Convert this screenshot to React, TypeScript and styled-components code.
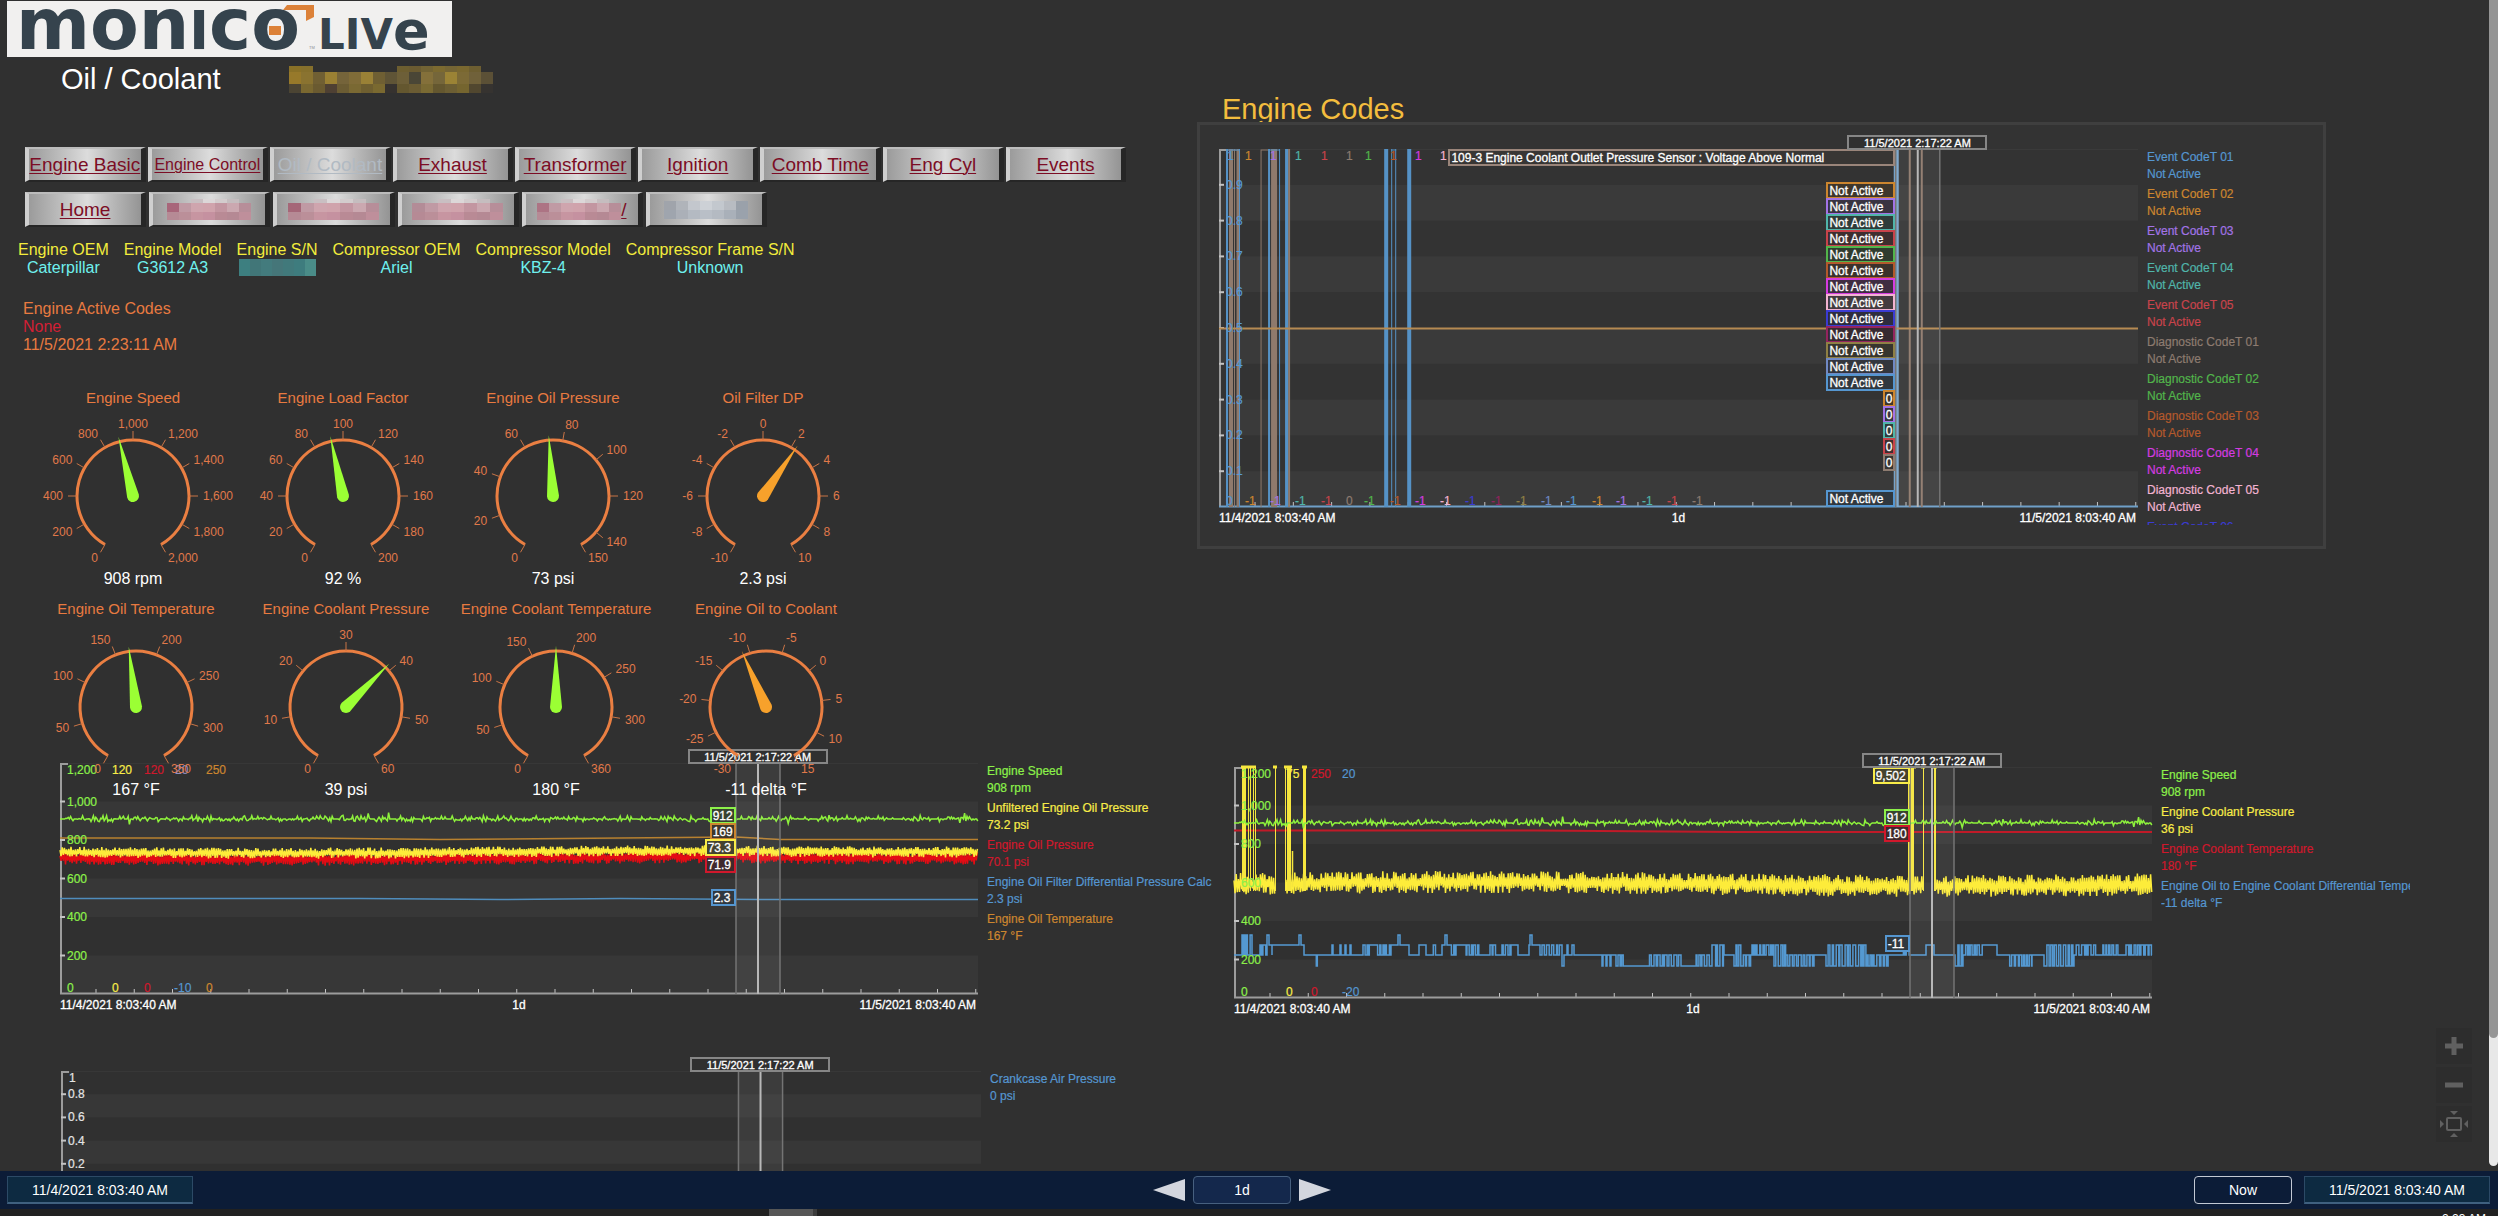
import React from "react";
import styled, { createGlobalStyle } from "styled-components";

const BLUE = "#5596d0";
const ORANGE = "#cc862f";
const PURPLE = "#a273e6";
const TEAL = "#50b5aa";
const RED = "#c8434b";
const BROWN = "#8d7b70";
const GREEN = "#52b54b";
const RUST = "#b4592c";
const MAGENTA = "#d53be0";
const PINK = "#f2b3d2";
const INDIGO = "#3b3bd2";
const CRIMSON = "#93245f";
const OLIVE = "#8f8045";
const STEEL = "#7089c4";
const LIME = "#8cf04a";
const YELLOW = "#f8ec48";
const CHERRY = "#d0182c";

const GlobalStyle = createGlobalStyle`
  * { box-sizing: border-box; }
  body {
    margin: 0;
    background: #303030;
    color: #fff;
    font-family: "Liberation Sans", Arial, Helvetica, sans-serif;
  }
`;

const Page = styled.div`
  display: flex;
  flex-direction: column;
  height: 100vh;
  overflow: hidden;
`;

const Viewport = styled.div`
  position: relative;
  display: flex;
  flex: 1;
  min-height: 0;
`;

const Board = styled.main`
  display: grid;
  grid-template-columns: 1197fr 1292fr;
  flex: 1;
  min-width: 0;
  overflow: hidden;
`;

const Column = styled.section<{ $top: number }>`
  display: flex;
  flex-direction: column;
  min-width: 0;
  padding-top: ${(p) => p.$top}px;
`;

const ScrollTrack = styled.div`
  width: 9px;
  margin-bottom: 5px;
  border-radius: 0 0 5px 5px;
  background: #e8e8e8;
`;

const ScrollThumb = styled.div`
  height: 89%;
  border-radius: 0 0 5px 5px;
  background: #959595;
`;

/* ---------- header ---------- */

const Logo = styled.svg`
  display: block;
  flex: none;
  margin-left: 7px;
  background: #f1f0ef;
`;

const TitleRow = styled.div`
  display: flex;
  align-items: center;
  gap: 68px;
  margin: 5px 0 51px 61px;
`;

const PageTitle = styled.h1`
  margin: 0;
  font-size: 29px;
  font-weight: 400;
  line-height: 34px;
  white-space: nowrap;
`;

const NavRow = styled.nav<{ $gap: number; $share: number }>`
  display: grid;
  grid-auto-flow: column;
  grid-auto-columns: 1fr;
  gap: ${(p) => p.$gap}px;
  width: ${(p) => p.$share}%;
  margin: 0 0 10px 25px;
`;

const NavLink = styled.a<{ $size?: number; $muted?: boolean }>`
  display: flex;
  align-items: center;
  justify-content: center;
  height: 35px;
  border-style: solid;
  border-width: 2px 5px 2px 4px;
  border-color: #bcbcbc #262626 #262626 #cfcfcf;
  background: linear-gradient(90deg, #9b9b9b 0%, #bdbdbd 28%, #dcdcdc 52%, #b9b9b9 74%, #949494 100%) padding-box;
  color: ${(p) => (p.$muted ? "#b1bac3" : "#7c0d25")};
  font-size: ${(p) => p.$size ?? 19}px;
  line-height: 21px;
  white-space: nowrap;
  text-decoration: underline;
  text-decoration-thickness: 1px;
  text-underline-offset: 2px;
`;

const Facts = styled.dl`
  display: flex;
  gap: 15px;
  margin: 4px 0 23px 18px;
  font-size: 16px;
  line-height: 18px;
  text-align: center;
  white-space: nowrap;
`;

const FactName = styled.dt`
  color: #f3ec3c;
`;

const FactValue = styled.dd`
  display: flex;
  justify-content: center;
  height: 18px;
  margin: 0;
  color: #6ff0ee;
`;

const ActiveCodes = styled.div`
  margin: 0 0 35px 23px;
  color: #e87a40;
  font-size: 16px;
  line-height: 18px;
`;

const NoCode = styled.div`
  color: #d31f35;
`;

/* ---------- mosaic ---------- */

type MosaicProps = { cell: number; rows: { h: number; colors: string[] }[] };

function Mosaic({ cell, rows }: MosaicProps) {
  const height = rows.reduce((sum, r) => sum + r.h, 0);
  const cols = Math.max(...rows.map((r) => r.colors.length));
  let y = 0;
  return (
    <svg width={cols * cell} height={height} aria-hidden="true" shapeRendering="crispEdges">
      {rows.map((row, i) => {
        const top = y;
        y += row.h;
        return row.colors.map((c, j) =>
          c ? <rect key={`${i}-${j}`} x={j * cell} y={top} width={cell} height={row.h} fill={c} /> : null
        );
      })}
    </svg>
  );
}

const SITE_MOSAIC = [
  { h: 6, colors: ["#8a7127", "#86702c", "", "", "", "", "", "", "", "#6d5e30", "#6b5b31", "#726334", "#7c6a30", "#756534", "#7a6830", "#6d5e31"] },
  { h: 12, colors: ["#97792a", "#8a7330", "#705f33", "#9a8033", "#75643a", "#806c38", "#9a8136", "#6f5f33", "#5f5436", "#6d5f38", "#4a4636", "#84703a", "#75663a", "#9b8335", "#7c6a36", "#70613a", "#5b5036"] },
  { h: 9, colors: ["#4b4433", "#7a6830", "#6a5a30", "#4e4033", "#6b5c33", "#7a6933", "#6f5f30", "#7a6930", "#36322f", "#64572f", "#6b5c33", "#7a6a33", "#64572f", "#6c5e33", "#75652f", "#51472f", "#363330"] },
];

const pinkMosaic = (a: string) => [
  { h: 4, colors: ["", "", "#c9bfc2", "#dcd7d8", "#d3cccd", "#c5bdbf", ""] },
  { h: 9, colors: [a, "#c09aa4", "#cfa5ae", "#d0a3ac", "#c396a1", "#cba8b0", "#b78e99"] },
  { h: 8, colors: ["#b68a95", "#bb8f99", "#c795a1", "#c591a0", "#b98a95", "#b58994", "#bf8f9b"] },
];

const GREY_MOSAIC = [
  { h: 9, colors: ["#a0a4ab", "#b0b4ba", "#c3c7cd", "#cdd1d6", "#c3c8ce", "#b8bcc2", "#9aa1aa"] },
  { h: 9, colors: ["#9fa5ae", "#abb0b8", "#b4bac2", "#b9bfc7", "#b4bac2", "#a9b0b9", "#9aa2ac"] },
];

const SERIAL_MOSAIC = [{ h: 17, colors: ["#3d7f80", "#417678", "#437b7d", "#457679", "#41797b", "#3e7c7e", "#4a8c88"] }];

/* ---------- gauges ---------- */

const GaugeRow = styled.div<{ $left: number }>`
  position: relative;
  z-index: 1;
  display: grid;
  grid-template-columns: repeat(4, 210px);
  margin-left: ${(p) => p.$left}px;
  margin-bottom: 13px;
`;

const GaugeBox = styled.figure`
  display: flex;
  flex-direction: column;
  align-items: center;
  margin: 0;
`;

const GaugeTitle = styled.figcaption`
  color: #e87a40;
  font-size: 15px;
  line-height: 18px;
  white-space: nowrap;
`;

const GaugeValue = styled.output`
  padding-top: 1px;
  font-size: 16px;
  line-height: 17px;
  white-space: nowrap;
`;

const GaugeDial = styled.svg`
  display: block;
  width: 210px;
  height: 162px;
  font-size: 12px;
  fill: #e0794a;
`;

type GaugeSpec = { title: string; value: number; text: string; min: number; max: number; step: number; warn?: boolean };

function Gauge({ title, value, text, min, max, step, warn }: GaugeSpec) {
  const cx = 105;
  const cy = 89;
  const angle = (v: number) => (((v - min) / (max - min)) * 300 - 150) * (Math.PI / 180);
  const at = (a: number, r: number, ry = r) => [cx + Math.sin(a) * r, cy - Math.cos(a) * ry];
  const marks: number[] = [];
  for (let v = min; v < max - step / 3; v += step) marks.push(v);
  marks.push(max);
  const [sx, sy] = at(angle(min), 56);
  const [ex, ey] = at(angle(max), 56);
  const deg = (angle(value) * 180) / Math.PI;
  return (
    <GaugeBox>
      <GaugeTitle>{title}</GaugeTitle>
      <GaugeDial viewBox="0 0 210 162">
        <path d={`M${sx} ${sy}A56 56 0 1 1 ${ex} ${ey}`} fill="none" stroke="#ea7f42" strokeWidth="3" />
        {marks.map((v) => {
          const a = angle(v);
          const [x1, y1] = at(a, 56);
          const [x2, y2] = at(a, 65);
          const [tx, ty] = at(a, 70, 72);
          const s = Math.sin(a);
          return (
            <g key={v}>
              <line x1={x1} y1={y1} x2={x2} y2={y2} stroke="#c87446" />
              <text x={tx} y={ty + 4} textAnchor={Math.abs(s) < 0.05 ? "middle" : s < 0 ? "end" : "start"}>
                {v.toLocaleString("en-US")}
              </text>
            </g>
          );
        })}
        <path
          d={`M${cx} ${cy - 61}L${cx + 6} ${cy}A6 6 0 0 1 ${cx - 6} ${cy}Z`}
          transform={`rotate(${deg} ${cx} ${cy})`}
          fill={warn ? "#f7a12b" : "#9bff34"}
        />
      </GaugeDial>
      <GaugeValue>{text}</GaugeValue>
    </GaugeBox>
  );
}

const GAUGES: GaugeSpec[][] = [
  [
    { title: "Engine Speed", value: 908, text: "908 rpm", min: 0, max: 2000, step: 200 },
    { title: "Engine Load Factor", value: 92, text: "92 %", min: 0, max: 200, step: 20 },
    { title: "Engine Oil Pressure", value: 73, text: "73 psi", min: 0, max: 150, step: 20 },
    { title: "Oil Filter DP", value: 2.3, text: "2.3 psi", min: -10, max: 10, step: 2, warn: true },
  ],
  [
    { title: "Engine Oil Temperature", value: 167, text: "167 °F", min: 0, max: 350, step: 50 },
    { title: "Engine Coolant Pressure", value: 39, text: "39 psi", min: 0, max: 60, step: 10 },
    { title: "Engine Coolant Temperature", value: 180, text: "180 °F", min: 0, max: 360, step: 50 },
    { title: "Engine Oil to Coolant", value: -11, text: "-11 delta °F", min: -30, max: 15, step: 5, warn: true },
  ],
];

/* ---------- trend charts ---------- */

const ChartRow = styled.div<{ $top: number; $left: number; $right?: number }>`
  display: flex;
  gap: 9px;
  margin-top: ${(p) => p.$top}px;
  padding: 0 ${(p) => p.$right ?? 0}px 0 ${(p) => p.$left}px;
`;

const ChartMain = styled.div`
  flex: 1;
  min-width: 0;
`;

const Plot = styled.div<{ $height: number }>`
  position: relative;
  height: ${(p) => p.$height}px;
`;

const PlotSvg = styled.svg`
  display: block;
  width: 100%;
  height: 100%;
  overflow: visible;
`;

const Caption = styled.div`
  display: grid;
  grid-template-columns: 1fr auto 1fr;
  padding-top: 4px;
  font-size: 12px;
  line-height: 15px;
  -webkit-text-stroke: 0.3px currentColor;
  span:last-child { text-align: right; padding-right: 2px; }
`;

const CursorTime = styled.div`
  position: absolute;
  left: 76%;
  top: -14px;
  width: 140px;
  height: 15px;
  margin-left: -70px;
  border: 2px solid #868686;
  background: #303030;
  font-size: 11px;
  line-height: 12px;
  text-align: center;
  white-space: nowrap;
  -webkit-text-stroke: 0.3px currentColor;
`;

const AxisText = styled.span<{ $x: number; $y: number; $color: string }>`
  position: absolute;
  left: ${(p) => p.$x}px;
  top: ${(p) => p.$y}px;
  color: ${(p) => p.$color};
  font-size: 12px;
  line-height: 14px;
  -webkit-text-stroke: 0.2px currentColor;
`;

const Tag = styled.span<{ $y: number; $color: string; $min?: number }>`
  position: absolute;
  right: 26.4%;
  top: ${(p) => p.$y}px;
  min-width: ${(p) => p.$min ?? 25}px;
  height: 17px;
  padding: 0 1px;
  border: 2px solid ${(p) => p.$color};
  background: color-mix(in srgb, ${(p) => p.$color} 12%, #2b2b2b);
  font-size: 12px;
  line-height: 14px;
  white-space: nowrap;
  -webkit-text-stroke: 0.3px currentColor;
`;

const LegendList = styled.ul<{ $width: number; $height?: number; $clip?: boolean }>`
  display: flex;
  flex: none;
  flex-direction: column;
  gap: 3px;
  width: ${(p) => p.$width}px;
  height: ${(p) => (p.$height ? `${p.$height}px` : "auto")};
  margin: 0;
  padding: 0;
  overflow: ${(p) => (p.$clip ? "hidden" : "visible")};
  list-style: none;
  font-size: 12px;
  line-height: 17px;
  white-space: nowrap;
  -webkit-text-stroke: 0.2px currentColor;
`;

const LegendItem = styled.li<{ $color: string }>`
  flex: none;
  color: ${(p) => p.$color};
  div { height: 17px; }
`;

type Label = [x: number, y: number, text: string, color: string];
type TagSpec = [y: number, text: string, color: string, min?: number];
type Entry = [name: string, value: string, color: string];

const W = 918;

type ChartProps = {
  height: number;
  divisions: number;
  labels: Label[];
  tags?: TagSpec[];
  fill?: string;
  axis?: string;
  children?: React.ReactNode;
};

function Chart({ height, divisions, labels, tags = [], fill = "#373737", axis = "#9c9c9c", children }: ChartProps) {
  const step = height / divisions;
  const hours = Array.from({ length: 24 }, (_, i) => 36 + i * 38.25);
  return (
    <ChartMain>
      <Plot $height={height}>
        <PlotSvg viewBox={`0 0 ${W} ${height}`} preserveAspectRatio="none">
          <line x1="0" x2={W} y1="0.5" y2="0.5" stroke={fill} />
          {Array.from({ length: divisions }, (_, i) =>
            i % 2 ? <rect key={i} x="0" y={i * step} width={W} height={step} fill={fill} /> : null
          )}
          <path d={`M8 1H1V${height}`} fill="none" stroke="#9c9c9c" strokeWidth="2" />
          {Array.from({ length: divisions - 1 }, (_, i) => (
            <line key={i} x1="0" x2="5" y1={(i + 1) * step} y2={(i + 1) * step} stroke="#c4c4c4" strokeWidth="2" />
          ))}
          {hours.map((x) => (
            <line key={x} x1={x} x2={x} y1={height - 5} y2={height} stroke="#c4c4c4" />
          ))}
          <line x1="0" x2={W} y1={height - 0.5} y2={height - 0.5} stroke={axis} strokeWidth="2" />
          {children}
          <rect x="676" y="0" width="44" height={height} fill="#fff" opacity="0.06" />
          <path d={`M676 0V${height}M720 0V${height}`} stroke="#747474" strokeWidth="1.5" />
          <line x1="698" x2="698" y1="0" y2={height} stroke="#b8b8b8" strokeWidth="2" />
        </PlotSvg>
        {labels.map(([x, y, text, color], i) => (
          <AxisText key={i} $x={x} $y={y - 7} $color={color}>{text}</AxisText>
        ))}
        {tags.map(([y, text, color, min], i) => (
          <Tag key={i} $y={y} $color={color} $min={min}>{text}</Tag>
        ))}
        <CursorTime>11/5/2021 2:17:22 AM</CursorTime>
      </Plot>
      <Caption>
        <span>11/4/2021 8:03:40 AM</span>
        <span>1d</span>
        <span>11/5/2021 8:03:40 AM</span>
      </Caption>
    </ChartMain>
  );
}

function Legend({ items, width, height, clip }: { items: Entry[]; width: number; height?: number; clip?: boolean }) {
  return (
    <LegendList $width={width} $height={height} $clip={clip}>
      {items.map(([name, value, color], i) => (
        <LegendItem key={i} $color={color}>
          <div>{name}</div>
          <div>{value}</div>
        </LegendItem>
      ))}
    </LegendList>
  );
}

function random(seed: number) {
  let s = seed;
  return () => {
    s = (s * 16807) % 2147483647;
    return s / 2147483647;
  };
}

/* Dense band of samples around a slowly drifting mean. */
function band(seed: number, from: number, to: number, mean: (x: number) => number, amp: number) {
  const r = random(seed);
  let d = "";
  let side = 1;
  for (let x = from; x <= to; x += 1.1) {
    side = -side;
    const y = mean(x) + side * amp * (0.35 + 0.75 * r());
    d += `${d ? "L" : "M"}${x.toFixed(1)} ${y.toFixed(1)}`;
  }
  return d;
}

/* Mostly flat line with short bursts. */
function ripple(seed: number, mean: number) {
  const r = random(seed);
  let d = `M0 ${mean}`;
  for (let x = 1; x <= W; x += 1.2) {
    const k = r();
    const y = k < 0.45 ? mean : mean + (r() - 0.55) * (k > 0.96 ? 12 : 6);
    d += `L${x.toFixed(1)} ${y.toFixed(1)}`;
  }
  return d;
}

/* [end, level] is a flat run, [end, low, high] flips between both levels. */
type Run = [number, number, number?];
const RUNS: Run[] = [
  [8, 188], [18, 188, 168], [26, 188], [33, 188, 178], [35, 168], [38, 188, 178], [65, 178], [67, 168], [70, 178],
  [80, 188], [84, 199, 188], [92, 188], [94, 178, 188], [98, 188], [99, 178], [106, 188], [107, 178], [111, 188],
  [112, 178], [116, 188], [117, 178], [129, 188], [136, 188, 178], [142, 178], [157, 188, 178], [164, 178],
  [166, 168], [175, 178], [185, 188], [192, 178], [198, 188], [203, 178, 188], [208, 188], [211, 178], [213, 168],
  [216, 178], [222, 188, 178], [231, 178], [247, 188, 178], [256, 188], [262, 188, 178], [268, 188], [277, 188, 178],
  [284, 178], [295, 188], [296, 178], [298, 168], [306, 178], [308, 188], [328, 188, 178], [330, 199], [334, 178, 188],
  [338, 188], [340, 178], [368, 188], [369, 199], [372, 188], [373, 199], [376, 188], [377, 199], [382, 188],
  [391, 188, 199], [413, 199], [447, 188, 199], [460, 199], [478, 188, 199], [480, 178], [490, 199, 178], [500, 188],
  [507, 178, 199], [518, 188, 199], [540, 188, 178], [552, 178, 199], [580, 199, 188], [592, 188], [633, 178, 199],
  [657, 199, 188], [668, 188], [676, 178, 188], [692, 188], [700, 178], [721, 188], [729, 178, 199], [750, 178, 188],
  [763, 178], [774, 188], [798, 199, 188], [810, 188], [840, 178, 199], [862, 178, 188], [868, 188], [884, 178, 188],
  [892, 188], [918, 188, 178],
];

function steps() {
  const r = random(77);
  let x = 0;
  let d = "M0 188";
  for (const [end, low, high] of RUNS) {
    if (high === undefined) {
      d += `V${low}H${end}`;
    } else {
      let flip = false;
      while (x < end) {
        x = Math.min(end, x + 0.8 + r() * 2.2);
        flip = !flip;
        d += `V${flip ? high : low}H${x.toFixed(1)}`;
      }
    }
    x = end;
  }
  return d;
}

const drift = (base: number) => (x: number) => base + 1.3 * Math.sin(x / 140) * (x < 700 ? 1 : 0.3);
const SPEED_LINE = ripple(11, 56);
const UNFILTERED_LINE = band(5, 0, W, drift(89), 5);
const OIL_LINE = band(9, 0, W, drift(95), 6);
const coolantMean = (x: number) => 117 - 2 * Math.sin(x / 150);
const COOLANT_LINE = [band(21, 0, 41, coolantMean, 10), band(22, 52, 689, coolantMean, 10), band(23, 701, W, coolantMean, 10)].join("");
const DELTA_LINE = steps();

const scale = (max: number, count: number, height: number, color: string, x: number): Label[] =>
  Array.from({ length: count - 1 }, (_, i) => [
    x,
    Math.round(((i + 1) * height) / count),
    Number((max - ((i + 1) * max) / count).toFixed(1)).toLocaleString("en-US"),
    color,
  ]);

const OIL_LABELS: Label[] = [
  [7, 7, "1,200", LIME], ...scale(1200, 6, 231, LIME, 7), [7, 225, "0", LIME],
  [52, 7, "120", YELLOW], [52, 225, "0", YELLOW],
  [84, 7, "120", CHERRY], [84, 225, "0", CHERRY],
  [115, 7, "20", "#8d8fc0"], [114, 225, "-10", BLUE],
  [146, 7, "250", ORANGE], [146, 225, "0", ORANGE],
];

const COOLANT_LABELS: Label[] = [
  [7, 7, "1,200", LIME], ...scale(1200, 6, 231, LIME, 7), [7, 225, "0", LIME],
  [52, 7, "75", YELLOW], [52, 225, "0", YELLOW],
  [77, 7, "250", CHERRY], [77, 225, "0", CHERRY],
  [108, 7, "20", BLUE], [108, 225, "-20", BLUE],
];

const AIR_LABELS: Label[] = [[8, 7, "1", "#e4e4e4"], ...scale(1, 5, 116, "#e4e4e4", 7)];

const TOP_MARKS: [number, string][] = [
  [8, BLUE], [26, ORANGE], [51, PURPLE], [76, TEAL], [102, RED], [127, BROWN], [146, GREEN], [171, RUST], [196, MAGENTA], [221, PINK],
];

const BOTTOM_MARKS: [number, string, string][] = [
  [7, "0", BLUE], [26, "-1", ORANGE], [51, "-1", PURPLE], [76, "-1", TEAL], [102, "-1", RED], [127, "0", BROWN],
  [145, "-1", GREEN], [171, "-1", RUST], [196, "-1", MAGENTA], [221, "-1", PINK], [246, "-1", INDIGO], [272, "-1", CRIMSON],
  [297, "-1", OLIVE], [322, "-1", STEEL], [347, "-1", BLUE], [373, "-1", ORANGE], [397, "-1", PURPLE], [423, "-1", TEAL],
  [448, "-1", RED], [473, "-1", BROWN],
];

const CODE_LABELS: Label[] = [
  ...scale(1, 10, 358, "#5a9ad2", 7),
  ...TOP_MARKS.map(([x, c]): Label => [x, 7, "1", c]),
  ...BOTTOM_MARKS.map(([x, t, c]): Label => [x, 352, t, c]),
];

const CODE_TAGS: TagSpec[] = [
  ...[ORANGE, PURPLE, TEAL, RED, GREEN, RUST, MAGENTA, PINK, INDIGO, CRIMSON, OLIVE, STEEL, BLUE].map(
    (c, i): TagSpec => [33 + i * 16, "Not Active", c, 69]
  ),
  ...[ORANGE, PURPLE, TEAL, RED, BROWN].map((c, i): TagSpec => [241 + i * 16, "0", c, 12]),
  [341, "Not Active", BLUE, 69],
  [0, "109-3 Engine Coolant Outlet Pressure Sensor : Voltage Above Normal", "#9a857a", 447],
];

const CODE_ENTRIES: Entry[] = [
  ["Event CodeT 01", BLUE], ["Event CodeT 02", ORANGE], ["Event CodeT 03", PURPLE], ["Event CodeT 04", TEAL],
  ["Event CodeT 05", RED], ["Diagnostic CodeT 01", BROWN], ["Diagnostic CodeT 02", GREEN], ["Diagnostic CodeT 03", RUST],
  ["Diagnostic CodeT 04", MAGENTA], ["Diagnostic CodeT 05", PINK], ["Event CodeT 06", INDIGO],
].map(([name, color]): Entry => [name, "Not Active", color]);

function Bars({ color, height, bars }: { color: string; height: number; bars: [number, number][] }) {
  return <>{bars.map(([x, w]) => <rect key={x} x={x} y="0" width={w} height={height} fill={color} />)}</>;
}

/* ---------- codes panel ---------- */

const CodesTitle = styled.h2`
  margin: 0 0 -3px 25px;
  color: #f3bd3e;
  font-size: 29px;
  font-weight: 400;
  line-height: 32px;
`;

const CodesPanel = styled.div`
  display: flex;
  gap: 9px;
  margin-right: 163px;
  padding: 24px 0 20px 19px;
  border: 3px solid #3f3f3f;
  background: #333;
`;

/* ---------- floating tools and footer ---------- */

const Tools = styled.div`
  position: absolute;
  right: 26px;
  bottom: 29px;
  display: flex;
  flex-direction: column;
  gap: 3px;
`;

const ToolButton = styled.button`
  display: grid;
  place-items: center;
  width: 36px;
  height: 36px;
  padding: 0;
  border: 0;
  background: #2d2d2d;
  color: #606060;
`;

const Footer = styled.footer`
  display: grid;
  grid-template-columns: 1fr auto 1fr;
  align-items: center;
  height: 38px;
  padding: 0 8px 0 7px;
  background: #0c1c37;
`;

const FooterGroup = styled.div<{ $end?: boolean; $gap: number }>`
  display: flex;
  align-items: center;
  justify-content: ${(p) => (p.$end ? "flex-end" : "flex-start")};
  gap: ${(p) => p.$gap}px;
`;

const CenterGroup = styled(FooterGroup)`
  margin-right: 13px;
`;

const BarButton = styled.button<{ $width: number; $fill: string; $edge: string; $round?: boolean }>`
  width: ${(p) => p.$width}px;
  height: 28px;
  padding: 0;
  border: 1px solid ${(p) => p.$edge};
  border-radius: ${(p) => (p.$round ? 4 : 0)}px;
  background: ${(p) => p.$fill};
  color: #fff;
  font-family: inherit;
  font-size: 14px;
`;

const DateButton = styled(BarButton)`
  border-bottom: 2px solid #3f607f;
`;

const ArrowButton = styled.button`
  display: flex;
  padding: 0;
  border: 0;
  background: none;
`;

const Strip = styled.div`
  display: flex;
  flex: none;
  height: 7px;
  justify-content: space-between;
  padding: 0 12px 0 769px;
  overflow: hidden;
  background: #212121;
  font-size: 12px;
  line-height: 14px;
`;

const StripMark = styled.div`
  width: 48px;
  background: linear-gradient(90deg, #565656 44px, #3c3c3c 44px);
`;

const Clock = styled.span`
  padding-top: 3px;
`;

function LogoMark() {
  return (
    <Logo width="445" height="56" viewBox="0 0 445 56" role="img" aria-label="monico live">
      <g fill="#35434d" fontFamily="'DejaVu Sans', Verdana, sans-serif" fontWeight="700">
        <text x="9" y="48" fontSize="71">
          mon<tspan fontSize="53">I</tspan>co
        </text>
        <text x="311" y="48" fontSize="42">
          LIV<tspan fontSize="54">e</tspan>
        </text>
      </g>
      <path d="M276 9L280 4H307V16L299 20V9Z" fill="#dc8138" />
      <rect x="262" y="25" width="12" height="9" fill="#dc8138" />
      <text x="302" y="48" fontSize="4" fill="#8a8f94">TM</text>
    </Logo>
  );
}

export default function App() {
  return (
    <Page>
      <GlobalStyle />
      <Viewport>
        <Board>
          <Column $top={1}>
            <LogoMark />
            <TitleRow>
              <PageTitle>Oil / Coolant</PageTitle>
              <Mosaic cell={12} rows={SITE_MOSAIC} />
            </TitleRow>
            <NavRow $gap={2} $share={92} aria-label="Engine pages">
              <NavLink href="#basic">Engine Basic</NavLink>
              <NavLink href="#control" $size={16}>Engine Control</NavLink>
              <NavLink href="#oil" $muted aria-current="page">Oil / Coolant</NavLink>
              <NavLink href="#exhaust">Exhaust</NavLink>
              <NavLink href="#transformer">Transformer</NavLink>
              <NavLink href="#ignition">Ignition</NavLink>
              <NavLink href="#comb">Comb Time</NavLink>
              <NavLink href="#cyl">Eng Cyl</NavLink>
              <NavLink href="#events">Events</NavLink>
            </NavRow>
            <NavRow $gap={3} $share={62} aria-label="Sites">
              <NavLink href="#home">Home</NavLink>
              <NavLink href="#site1" aria-label="Site 1"><Mosaic cell={12} rows={pinkMosaic("#a8667a")} /></NavLink>
              <NavLink href="#site2" aria-label="Site 2"><Mosaic cell={13} rows={pinkMosaic("#a56778")} /></NavLink>
              <NavLink href="#site3" aria-label="Site 3"><Mosaic cell={13} rows={pinkMosaic("#b38c97")} /></NavLink>
              <NavLink href="#site4"><Mosaic cell={12} rows={pinkMosaic("#ad7484")} />/</NavLink>
              <NavLink href="#site5" aria-label="Site 5"><Mosaic cell={12} rows={GREY_MOSAIC} /></NavLink>
            </NavRow>
            <Facts>
              <div><FactName>Engine OEM</FactName><FactValue>Caterpillar</FactValue></div>
              <div><FactName>Engine Model</FactName><FactValue>G3612 A3</FactValue></div>
              <div><FactName>Engine S/N</FactName><FactValue><Mosaic cell={11} rows={SERIAL_MOSAIC} /></FactValue></div>
              <div><FactName>Compressor OEM</FactName><FactValue>Ariel</FactValue></div>
              <div><FactName>Compressor Model</FactName><FactValue>KBZ-4</FactValue></div>
              <div><FactName>Compressor Frame S/N</FactName><FactValue>Unknown</FactValue></div>
            </Facts>
            <ActiveCodes>
              <div>Engine Active Codes</div>
              <NoCode>None</NoCode>
              <div>11/5/2021 2:23:11 AM</div>
            </ActiveCodes>
            <GaugeRow $left={28}>{GAUGES[0].map((g) => <Gauge key={g.title} {...g} />)}</GaugeRow>
            <GaugeRow $left={31}>{GAUGES[1].map((g) => <Gauge key={g.title} {...g} />)}</GaugeRow>
            <ChartRow $top={-48} $left={60}>
              <Chart
                height={231}
                divisions={6}
                labels={OIL_LABELS}
                tags={[[44, "912", LIME], [60, "169", ORANGE], [76, "73.3", YELLOW, 31], [93, "71.9", CHERRY, 31], [126, "2.3", BLUE]]}
              >
                <path d="M0 75H250L380 76.5L560 75L676 74L720 76.5H918" fill="none" stroke="#b8812f" strokeWidth="1.5" />
                <path d={OIL_LINE} fill="none" stroke="#e40c14" strokeWidth="1.5" />
                <path d={UNFILTERED_LINE} fill="none" stroke="#fdec3a" strokeWidth="1.5" />
                <path d={SPEED_LINE} fill="none" stroke="#8ef23c" strokeWidth="1.5" />
                <path d="M0 135.5H300L440 136.5L560 135.5L700 136.5H918" fill="none" stroke="#4f8dbd" strokeWidth="1.5" />
              </Chart>
              <Legend
                width={210}
                items={[
                  ["Engine Speed", "908 rpm", LIME],
                  ["Unfiltered Engine Oil Pressure", "73.2 psi", YELLOW],
                  ["Engine Oil Pressure", "70.1 psi", CHERRY],
                  ["Engine Oil Filter Differential Pressure Calc", "2.3 psi", BLUE],
                  ["Engine Oil Temperature", "167 °F", ORANGE],
                ]}
              />
            </ChartRow>
            <ChartRow $top={58} $left={61}>
              <Chart height={116} divisions={5} labels={AIR_LABELS} />
              <Legend width={207} items={[["Crankcase Air Pressure", "0 psi", BLUE]]} />
            </ChartRow>
          </Column>

          <Column $top={93}>
            <CodesTitle>Engine Codes</CodesTitle>
            <CodesPanel>
              <Chart height={358} divisions={10} labels={CODE_LABELS} tags={CODE_TAGS} fill="#3a3a3a" axis="#6f9fc8">
                <path d="M42 358V1H51M18 358V1H8" fill="none" stroke="#8f7a6c" />
                <Bars color="#8f7a6c" height={358} bars={[[10, 4], [15, 1], [18, 2], [52, 6], [69, 2], [689, 2], [701, 2]]} />
                <Bars color="#5592c6" height={358} bars={[[7, 2], [20, 1], [49, 2], [60, 1], [66, 3], [165, 4], [172, 1], [176, 1], [188, 4]]} />
                <path d="M7 1H21M49 1H61M172 1H177" stroke="#5592c6" />
                <Bars color="#78a4cb" height={358} bars={[[674, 5]]} />
                <line x1="0" x2={W} y1="179.5" y2="179.5" stroke="#b58a52" strokeWidth="2" />
              </Chart>
              <Legend width={176} height={376} clip items={CODE_ENTRIES} />
            </CodesPanel>
            <ChartRow $top={218} $left={37} $right={79}>
              <Chart
                height={231}
                divisions={6}
                labels={COOLANT_LABELS}
                tags={[[0, "9,502", YELLOW, 37], [42, "912", LIME], [58, "180", CHERRY], [168, "-11", BLUE]]}
              >
                <path d={DELTA_LINE} fill="none" stroke="#5499d2" strokeWidth="1.5" />
                <path d="M0 63.5H300L500 65H918" fill="none" stroke="#c01a28" strokeWidth="2" />
                <path d={COOLANT_LINE} fill="none" stroke="#fdec3a" strokeWidth="1.5" />
                <Bars
                  color="#f6e63e"
                  height={124}
                  bars={[[8, 4], [14, 1], [16, 1], [19, 1], [21, 1], [41, 1], [51, 1], [53, 4], [69, 3], [674, 6], [689, 1], [700, 2]]}
                />
                <path d="M58.5 84V120" stroke="#f6e63e" strokeWidth="1.5" />
                <path d="M7 0H22M39 0H43M50 0H58M68 0H73M673 0H682M687 0H691M699 0H703" stroke="#f6e63e" strokeWidth="3" />
                <path d={SPEED_LINE} fill="none" stroke="#8ef23c" strokeWidth="1.5" />
              </Chart>
              <Legend
                width={249}
                clip
                items={[
                  ["Engine Speed", "908 rpm", LIME],
                  ["Engine Coolant Pressure", "36 psi", YELLOW],
                  ["Engine Coolant Temperature", "180 °F", CHERRY],
                  ["Engine Oil to Engine Coolant Differential Temperature", "-11 delta °F", BLUE],
                ]}
              />
            </ChartRow>
          </Column>
        </Board>
        <ScrollTrack><ScrollThumb /></ScrollTrack>
        <Tools>
          <ToolButton aria-label="Zoom in">
            <svg width="18" height="18" viewBox="0 0 18 18"><path d="M9 0V18M0 9H18" stroke="currentColor" strokeWidth="5" /></svg>
          </ToolButton>
          <ToolButton aria-label="Zoom out">
            <svg width="18" height="18" viewBox="0 0 18 18"><path d="M0 9H18" stroke="currentColor" strokeWidth="5" /></svg>
          </ToolButton>
          <ToolButton aria-label="Fit to screen">
            <svg width="28" height="28" viewBox="0 0 28 28" fill="currentColor">
              <rect x="7" y="8" width="14" height="12" rx="1" fill="none" stroke="currentColor" strokeWidth="2" />
              <path d="M10 1H18L14 5ZM10 27H18L14 23ZM0 10V18L4 14ZM28 10V18L24 14Z" />
            </svg>
          </ToolButton>
        </Tools>
      </Viewport>
      <Footer>
        <FooterGroup $gap={12}>
          <DateButton $width={186} $fill="#0d2a41" $edge="#2c4a66">11/4/2021 8:03:40 AM</DateButton>
        </FooterGroup>
        <CenterGroup $gap={8}>
          <ArrowButton aria-label="Earlier">
            <svg width="32" height="22" viewBox="0 0 32 22"><path d="M0 11L32 0V22Z" fill="#d3d6de" /></svg>
          </ArrowButton>
          <BarButton $width={98} $fill="#14284c" $edge="#47607f" $round>1d</BarButton>
          <ArrowButton aria-label="Later">
            <svg width="32" height="22" viewBox="0 0 32 22"><path d="M32 11L0 0V22Z" fill="#d3d6de" /></svg>
          </ArrowButton>
        </CenterGroup>
        <FooterGroup $end $gap={12}>
          <BarButton $width={98} $fill="#0c1c37" $edge="#c3c9d4" $round>Now</BarButton>
          <DateButton $width={186} $fill="#0d2a41" $edge="#2c4a66">11/5/2021 8:03:40 AM</DateButton>
        </FooterGroup>
      </Footer>
      <Strip>
        <StripMark />
        <Clock>2:23 AM</Clock>
      </Strip>
    </Page>
  );
}
